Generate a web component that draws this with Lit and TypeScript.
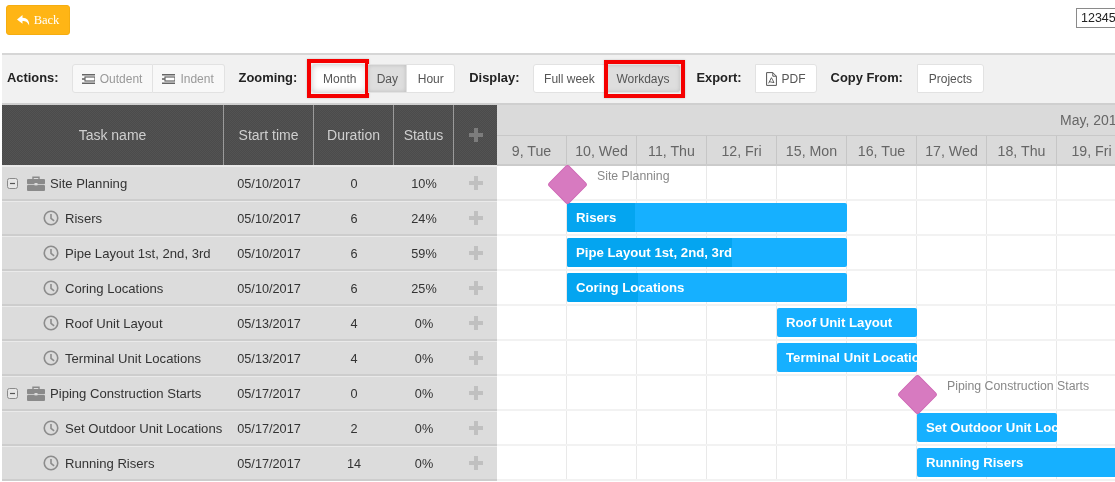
import { LitElement, html, css } from "lit";
import { customElement } from "lit/decorators.js";

const clock = html`<svg class="clock" viewBox="0 0 18 18"><circle cx="9" cy="9" r="7.6" fill="none" stroke="#8c8c8c" stroke-width="1.8"/><path d="M9 4.5V9.3L12.5 12.2" fill="none" stroke="#8c8c8c" stroke-width="1.8"/></svg>`;
const briefcase = html`<svg class="case" viewBox="0 0 18 15"><path d="M6 3V1.2h6V3" fill="none" stroke="#8a8a8a" stroke-width="1.4"/><rect x="0" y="3" width="18" height="5.2" rx="1" fill="#8a8a8a"/><rect x="0" y="9" width="18" height="6" rx="1" fill="#8a8a8a"/><rect x="7.5" y="7" width="3" height="2.4" fill="#dcdcdc"/></svg>`;
const minus = html`<svg class="minus" viewBox="0 0 11 11"><rect x=".5" y=".5" width="10" height="10" rx="2" fill="#e6e6e6" stroke="#8a8a8a"/><path d="M3 5.5h5" stroke="#555" stroke-width="1.2"/></svg>`;
const plus = html`<svg class="plus" viewBox="0 0 14 14"><path d="M5 0h4v5h5v4H9v5H5V9H0V5h5z" fill="#c0c0c0"/></svg>`;
const headPlus = html`<svg class="plus" viewBox="0 0 14 14"><path d="M5 0h4v5h5v4H9v5H5V9H0V5h5z" fill="#7c7c7c"/></svg>`;
const indentIcon = html`<svg class="tool" viewBox="0 0 13 10"><path d="M0 .8h13M0 9.2h13" stroke="#666" stroke-width="1.6"/><rect x="3" y="3" width="10" height="4" fill="#fff" stroke="#666" stroke-width="1.2"/><path d="M0 5h3" stroke="#666" stroke-width="1.6"/></svg>`;
const pdf = html`<svg class="pdf" viewBox="0 0 11 14"><path d="M.6.6h6.2l3.6 3.6v9.2H.6z M6.8.6v3.6h3.6" fill="none" stroke="#555" stroke-width="1"/><path d="M2.6 11.3 5.4 5.7 8 10.6 3 9.6" fill="none" stroke="#555" stroke-width=".9"/></svg>`;
const reply = html`<svg class="reply" viewBox="0 0 13 11"><path d="M5.5 0 0 4.4l5.5 4.4V6c3 0 5 .8 6.6 4.6C12.6 5.6 10 2.9 5.5 2.8z" fill="#fff"/></svg>`;

type Row = { name: string; start: string; dur: string; status: string; project?: boolean };
const rows: Row[] = [
  { name: "Site Planning", start: "05/10/2017", dur: "0", status: "10%", project: true },
  { name: "Risers", start: "05/10/2017", dur: "6", status: "24%" },
  { name: "Pipe Layout 1st, 2nd, 3rd", start: "05/10/2017", dur: "6", status: "59%" },
  { name: "Coring Locations", start: "05/10/2017", dur: "6", status: "25%" },
  { name: "Roof Unit Layout", start: "05/13/2017", dur: "4", status: "0%" },
  { name: "Terminal Unit Locations", start: "05/13/2017", dur: "4", status: "0%" },
  { name: "Piping Construction Starts", start: "05/17/2017", dur: "0", status: "0%", project: true },
  { name: "Set Outdoor Unit Locations", start: "05/17/2017", dur: "2", status: "0%" },
  { name: "Running Risers", start: "05/17/2017", dur: "14", status: "0%" },
];
const days = ["9, Tue", "10, Wed", "11, Thu", "12, Fri", "15, Mon", "16, Tue", "17, Wed", "18, Thu", "19, Fri"];
const CELL = 70;
/* start cell, span in cells, progress width in px */
const bars: ({ start: number; span: number; progress: number } | { milestone: number })[] = [
  { milestone: 1 },
  { start: 1, span: 4, progress: 68 },
  { start: 1, span: 4, progress: 165 },
  { start: 1, span: 4, progress: 71 },
  { start: 4, span: 2, progress: 0 },
  { start: 4, span: 2, progress: 0 },
  { milestone: 6 },
  { start: 6, span: 2, progress: 0 },
  { start: 6, span: 4, progress: 0 },
];

@customElement("app-root")
export class AppRoot extends LitElement {
  static styles = css`
    :host { display: block; width: 1115px; height: 482px; overflow: hidden; background: #fff; font-family: "Liberation Sans", Arial, sans-serif; color: #333; }
    .page { filter: blur(0.3px); }
    .top { height: 53px; display: grid; grid-template-columns: 1070px 60px; align-items: start; padding-left: 6px; box-sizing: border-box; }
    .back { margin-top: 5px; width: 64px; height: 30px; box-sizing: border-box; display: flex; align-items: center; justify-content: center; gap: 4px; background: #ffb515; border: 1px solid #f5ad10; border-radius: 3px; color: #fff; font: 12.5px "Liberation Serif", serif; }
    .reply { width: 13px; height: 11px; }
    .num { margin-top: 8px; width: 60px; height: 20px; box-sizing: border-box; border: 1px solid #8a8a8a; padding-left: 4px; font-size: 12.5px; line-height: 19px; color: #222; background: #fff; }
    .main { margin-left: 2px; }
    .toolbar { height: 52px; box-sizing: border-box; border-top: 2px solid #d6d6d6; border-bottom: 2px solid #cfcfcf; background: #f1f1f1; display: flex; align-items: center; padding-bottom: 1px; padding-left: 5px; }
    .label { font-size: 12.9px; font-weight: bold; color: #222; margin-top: -3px; white-space: nowrap; }
    .group { display: flex; height: 29px; }
    .btn { position: relative; box-sizing: border-box; height: 29px; display: flex; align-items: center; justify-content: center; gap: 5px; background: #fff; border: 1px solid #e2e2e2; border-left-width: 0; font-size: 12px; color: #555; white-space: nowrap; }
    .btn:first-child { border-left-width: 1px; border-radius: 3px 0 0 3px; }
    .btn:last-child { border-radius: 0 3px 3px 0; }
    .btn.off { background: #f8f8f8; color: #999; }
    .btn.on { background: #dedede; box-shadow: inset 0 0 4px #bbb; }
    .btn.soft { box-shadow: inset 0 0 6px #ccc; }
    .btn.mark::after { content: ""; position: absolute; border: 4px solid #f50000; box-shadow: 0 0 2px rgba(0,0,0,.2); box-sizing: border-box; }
    .btn.m1::after { left: -5px; right: -2px; top: -6px; bottom: -6px; }
    .btn.m2::after { left: -1px; right: -5px; top: -5px; bottom: -6px; }
    .tool { width: 13px; height: 10px; }
    .pdf { width: 11px; height: 14px; }
    .gantt { display: flex; height: 377px; }
    .grid { width: 495px; flex: none; }
    .cols { display: grid; grid-template-columns: 222px 90px 80px 60px 43px; }
    .ghead { height: 61px; box-sizing: border-box; border-bottom: 1px solid #e8e8e8; background: repeating-conic-gradient(#535353 0 25%, #4b4b4b 0 50%) 0 0 / 2px 2px; color: #cfcfcf; font-size: 14px; }
    .ghead > div { display: flex; align-items: center; justify-content: center; border-right: 1px solid #9a9a9a; box-sizing: border-box; }
    .ghead > div:last-child { border-right: 0; }
    .grow { height: 35px; box-sizing: border-box; padding-top: 1px; background: #dcdcdc; border-top: 1px solid #eaeaea; border-bottom: 2px solid #cdcdcd; font-size: 12.7px; color: #333; align-items: center; }
    .grow > div { display: flex; align-items: center; justify-content: center; white-space: nowrap; }
    .grow > .name { justify-content: flex-start; font-size: 13.1px; }
    .name.task { padding-left: 41px; }
    .name.project { padding-left: 5px; }
    .clock { width: 16px; height: 16px; margin-right: 6px; flex: none; margin-top: -1px; }
    .case { width: 18px; height: 15px; margin-right: 5px; flex: none; }
    .minus { width: 11px; height: 11px; margin-right: 9px; flex: none; }
    .plus { width: 14px; height: 14px; }
    .grow .plus { margin-top: -2px; }
    .time { flex: 1; min-width: 0; overflow: hidden; }
    .months { height: 31px; box-sizing: border-box; background: #dadada; border-bottom: 1px solid #c8c8c8; font-size: 14px; color: #666; padding: 5px 0 0 563px; line-height: 20px; white-space: nowrap; }
    .dayrow { display: flex; height: 30px; box-sizing: border-box; padding-top: 1px; background: #dadada; border-bottom: 2px solid #cbcbcb; }
    .day { width: 70px; flex: none; box-sizing: border-box; border-right: 1px solid #c6c6c6; margin-top: -1px; padding-top: 1px; display: flex; align-items: center; justify-content: center; font-size: 14.2px; color: #666; white-space: nowrap; }
    .trow { position: relative; display: flex; height: 35px; box-sizing: border-box; border-bottom: 2px solid #f2f2f2; }
    .tcell { width: 70px; flex: none; box-sizing: border-box; border-right: 1px solid #e9e9e9; }
    .bar { position: absolute; top: 2px; height: 29px; box-sizing: border-box; background: #16b0ff; border-radius: 2px; overflow: hidden; color: #fff; font-weight: bold; font-size: 13.2px; line-height: 30px; padding-left: 9px; white-space: nowrap; z-index: 1; }
    .fill { position: absolute; left: 0; top: 0; bottom: 0; background: #04a5f0; }
    .bar span { position: relative; }
    .dia { position: absolute; top: 4px; width: 29px; height: 29px; background: #d77ac0; border: 1px solid #cf68b5; box-sizing: border-box; border-radius: 3px; transform: rotate(45deg); z-index: 2; }
    .mlabel { position: absolute; top: 2px; font-size: 12.3px; line-height: 16px; color: #888; white-space: nowrap; z-index: 1; }
    .s1 { margin-left: 13px; } .s2 { margin-left: 14px; } .s3 { margin-left: 14px; } .s4 { margin-left: 13px; } .s5 { margin-left: 14px; }
    .g1 { margin-left: 14px; } .g2 { margin-left: 14px; } .g3 { margin-left: 15px; } .g4 { margin-left: 14px; }
  `;

  private bar(b: (typeof bars)[number], label: string) {
    if ("milestone" in b) {
      const c = b.milestone * CELL;
      return html`<div class="dia" style="left:${c - 14.5}px"></div><div class="mlabel" style="left:${c + 30}px">${label}</div>`;
    }
    return html`<div class="bar" style="left:${b.start * CELL}px;width:${b.span * CELL}px">
      ${b.progress ? html`<div class="fill" style="width:${b.progress}px"></div>` : null}<span>${label}</span></div>`;
  }

  render() {
    return html`
      <div class="page">
      <div class="top">
        <div class="back">${reply}<span>Back</span></div>
        <div class="num">12345678</div>
      </div>
      <div class="main">
        <div class="toolbar">
          <span class="label">Actions:</span>
          <div class="group s1">
            <div class="btn off" style="width:81px">${indentIcon}Outdent</div>
            <div class="btn off" style="width:72px">${indentIcon}Indent</div>
          </div>
          <span class="label g1">Zooming:</span>
          <div class="group s2">
            <div class="btn soft mark m1" style="width:57px">Month</div>
            <div class="btn on" style="width:39px">Day</div>
            <div class="btn" style="width:48px">Hour</div>
          </div>
          <span class="label g2">Display:</span>
          <div class="group s3">
            <div class="btn" style="width:72px">Full week</div>
            <div class="btn on mark m2" style="width:76px">Workdays</div>
          </div>
          <span class="label g3">Export:</span>
          <div class="group s4"><div class="btn" style="width:62px">${pdf}PDF</div></div>
          <span class="label g4">Copy From:</span>
          <div class="group s5"><div class="btn" style="width:67px">Projects</div></div>
        </div>
        <div class="gantt">
          <div class="grid">
            <div class="cols ghead">
              <div>Task name</div><div>Start time</div><div>Duration</div><div>Status</div><div>${headPlus}</div>
            </div>
            ${rows.map((r) => html`<div class="cols grow">
              <div class="name ${r.project ? "project" : "task"}">${r.project ? html`${minus}${briefcase}` : clock}${r.name}</div>
              <div>${r.start}</div><div>${r.dur}</div><div>${r.status}</div><div>${plus}</div>
            </div>`)}
          </div>
          <div class="time">
            <div class="months">May, 2017</div>
            <div class="dayrow">${days.map((d) => html`<div class="day">${d}</div>`)}</div>
            ${rows.map((r, i) => html`<div class="trow">
              ${days.map(() => html`<div class="tcell"></div>`)}
              ${this.bar(bars[i], r.name)}
            </div>`)}
          </div>
        </div>
      </div>
      </div>
    `;
  }
}
